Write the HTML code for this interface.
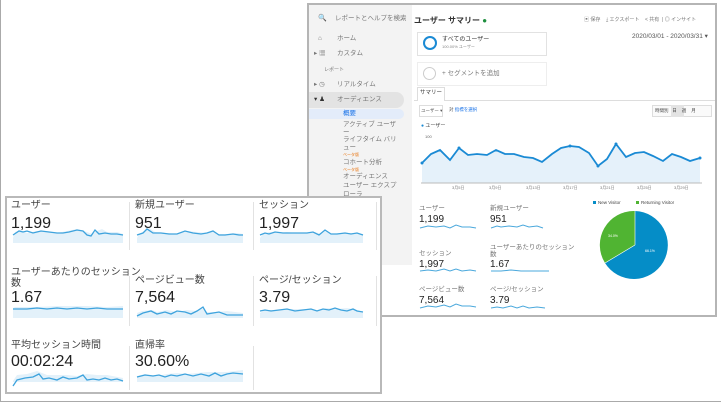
<!DOCTYPE html>
<html><head><meta charset="utf-8"><style>
*{margin:0;padding:0;box-sizing:border-box}
body{width:721px;height:402px;background:#fff;position:relative;overflow:hidden;font-family:"Liberation Sans","Noto Sans CJK JP",sans-serif;color:#333}
.a{position:absolute;white-space:nowrap;line-height:1}
.frame{position:absolute;left:0;top:0;width:721px;height:402px;border:1px solid #aaa;border-top:none;border-right:none}
.back{position:absolute;left:307px;top:3px;width:410px;height:314px;border:2px solid #b5b5b5;background:#fff;overflow:hidden}
.side{position:absolute;left:0;top:0;width:103px;height:260px;background:#f3f3f3}
.front{position:absolute;left:5px;top:196px;width:377px;height:198px;border:2px solid #b9b9b9;background:#fff}
.lbl{font-size:10px;color:#444}
.val{font-size:16px;color:#222}
.vd{position:absolute;width:1px;background:#e2e2e2}
.s{font-size:6.5px;color:#777}
.m{font-size:10px;color:#222}
</style></head><body>
<div class="frame"></div>
<div class="back">
 <div class="side">
  <div class="a s" style="left:9px;top:10px;font-size:7px">🔍</div>
  <div class="a s" style="left:26px;top:11px">レポートとヘルプを検索</div>
  <div class="a s" style="left:9px;top:31px">⌂</div><div class="a s" style="left:28px;top:31px">ホーム</div>
  <div class="a s" style="left:5px;top:46px">▸ ▦</div><div class="a s" style="left:28px;top:46px">カスタム</div>
  <div class="a s" style="left:15px;top:63px;font-size:5px">レポート</div>
  <div class="a s" style="left:5px;top:77px">▸ ◷</div><div class="a s" style="left:28px;top:77px">リアルタイム</div>
  <div style="position:absolute;left:0;top:87px;width:95px;height:16px;background:#e3e3e3;border-radius:0 8px 8px 0"></div>
  <div class="a s" style="left:5px;top:92px;color:#333">▾ ♟</div><div class="a s" style="left:28px;top:92px">オーディエンス</div>
  <div style="position:absolute;left:0;top:104px;width:95px;height:10px;background:#e3ecfa;border-radius:0 6px 6px 0"></div>
  <div class="a s" style="left:34px;top:106px;color:#1a73e8">概要</div>
  <div class="a s" style="left:34px;top:116px;line-height:7.5px">アクティブ ユーザ<br>ー<br>ライフタイム バリ<br>ュー<br><span style="color:#e8710a;font-size:4px">ベータ版</span><br>コホート分析<br><span style="color:#e8710a;font-size:4px">ベータ版</span></div>
  <div class="a s" style="left:34px;top:167px;line-height:9px">オーディエンス<br>ユーザー エクスプ<br>ローラ</div>
 </div>
 <div class="a" style="left:105px;top:12px;font-size:8px;font-weight:bold;color:#333">ユーザー サマリー <span style="color:#1e8e3e">●</span></div>
 <div class="a s" style="left:275px;top:13px;font-size:5px">▣ 保存 &nbsp;&nbsp; ⤓ エクスポート &nbsp;&nbsp; &lt; 共有 &nbsp;| ◎ インサイト</div>
 <div class="a s" style="left:323px;top:29px;font-size:6.5px;color:#555">2020/03/01 - 2020/03/31 ▾</div>
 <div style="position:absolute;left:108px;top:27px;width:130px;height:24px;border:1px solid #e2e2e2"></div>
 <div style="position:absolute;left:114px;top:31px;width:14px;height:14px;border:2.5px solid #1a8ad4;border-radius:50%"></div>
 <div class="a" style="left:133px;top:32px;font-size:6px">すべてのユーザー</div>
 <div class="a" style="left:133px;top:40px;font-size:4px;color:#888">100.00% ユーザー</div>
 <div style="position:absolute;left:108px;top:57px;width:130px;height:24px;border:1px solid #eee"></div>
 <div style="position:absolute;left:114px;top:62px;width:13px;height:13px;border:1px solid #ccc;border-radius:50%"></div>
 <div class="a s" style="left:133px;top:66px">+ セグメントを追加</div>
 <div style="position:absolute;left:105px;top:95px;width:305px;height:1px;background:#ddd"></div>
 <div style="position:absolute;left:108px;top:82px;width:28px;height:14px;border:1px solid #ddd;border-bottom:none;background:#fff"></div>
 <div class="a" style="left:111px;top:86px;font-size:5.5px">サマリー</div>
 <div style="position:absolute;left:110px;top:100px;width:24px;height:12px;border:1px solid #ddd"></div>
 <div class="a" style="left:112px;top:104px;font-size:4.5px;color:#555">ユーザー ▾</div>
 <div class="a" style="left:140px;top:103px;font-size:4.5px;color:#1a73e8"><span style="color:#555">対</span> 指標を選択</div>
 <div style="position:absolute;left:343px;top:100px;width:60px;height:12px;border:1px solid #ddd;background:#fafafa"></div>
 <div style="position:absolute;left:362px;top:100px;width:13px;height:12px;background:#e3e3e3"></div>
 <div class="a" style="left:346px;top:104px;font-size:4.5px;color:#444">時間別 &nbsp; 日 &nbsp;&nbsp; 週 &nbsp;&nbsp; 月</div>
 <div class="a" style="left:112px;top:119px;font-size:5px"><span style="color:#1a8ad4">●</span> ユーザー</div>
 <div class="a" style="left:116px;top:130px;font-size:4px;color:#666">100</div>
</div>
<svg class="a" style="left:0;top:0" width="721" height="402">
 <polygon fill="#e5f1fa" points="422,163 431,154 440,150 450,160 459,148 468,155 477,154 487,155 496,150 505,154 514,154 524,157 533,158 542,162 552,154 561,148 570,146 579,147 589,153 598,166 607,159 616,144 626,157 635,153 644,152 653,156 663,161 672,154 681,157 690,161 700,158 700,183 422,183"/>
 <polyline fill="none" stroke="#1a8ad4" stroke-width="1.8" points="422,163 431,154 440,150 450,160 459,148 468,155 477,154 487,155 496,150 505,154 514,154 524,157 533,158 542,162 552,154 561,148 570,146 579,147 589,153 598,166 607,159 616,144 626,157 635,153 644,152 653,156 663,161 672,154 681,157 690,161 700,158"/>
 <g fill="#1a8ad4"><circle cx="422" cy="163" r="1.5"/><circle cx="459" cy="148" r="1.5"/><circle cx="570" cy="146" r="1.5"/><circle cx="598" cy="166" r="1.5"/><circle cx="616" cy="144" r="1.5"/><circle cx="700" cy="158" r="1.5"/></g>
 <line x1="421" y1="183" x2="702" y2="183" stroke="#bbb"/>
 <g font-size="4" fill="#777" font-family="Liberation Sans"><text x="452" y="189">3月5日</text><text x="489" y="189">3月9日</text><text x="526" y="189">3月13日</text><text x="563" y="189">3月17日</text><text x="600" y="189">3月21日</text><text x="637" y="189">3月25日</text><text x="674" y="189">3月29日</text></g>
 <path d="M635 211 A34 34 0 1 1 605 263 L635 245Z" fill="#058dc7"/>
 <path d="M635 211 A34 34 0 0 0 605 263 L635 245Z" fill="#50b432"/>
 <line x1="635" y1="211" x2="635" y2="245" stroke="#fff" stroke-width=".6"/><line x1="605" y1="263" x2="635" y2="245" stroke="#fff" stroke-width=".6"/>
 <text x="645" y="252" font-size="3.5" fill="#fff">66.1%</text><text x="608" y="237" font-size="3.5" fill="#fff">34.0%</text>
 <rect x="593" y="201" width="3" height="3" fill="#058dc7"/><text x="598" y="204" font-size="4.5" fill="#444">New Visitor</text>
 <rect x="636" y="201" width="3" height="3" fill="#50b432"/><text x="641" y="204" font-size="4.5" fill="#444">Returning Visitor</text>
</svg>
<div class="a s" style="left:419px;top:206px">ユーザー</div><div class="a m" style="left:419px;top:215px">1,199</div>
<div class="a s" style="left:490px;top:206px">新規ユーザー</div><div class="a m" style="left:490px;top:215px">951</div>
<div class="a s" style="left:419px;top:251px">セッション</div><div class="a m" style="left:419px;top:260px">1,997</div>
<div class="a s" style="left:490px;top:244px;line-height:7px">ユーザーあたりのセッション<br>数</div><div class="a m" style="left:490px;top:260px">1.67</div>
<div class="a s" style="left:419px;top:287px">ページビュー数</div><div class="a m" style="left:419px;top:296px">7,564</div>
<div class="a s" style="left:490px;top:287px">ページ/セッション</div><div class="a m" style="left:490px;top:296px">3.79</div>
<svg class="a" style="left:0;top:0" width="721" height="402" fill="none" stroke="#4aa8dc" stroke-width="1">
 <path d="M420 228 l8 -2 8 1 8 -1 6 2 6 -3 6 2 8 0 6 1" /><path d="M491 228 l6 -2 4 1 8 -1 8 1 6 -2 6 2 8 -1 6 2"/><path d="M420 271 l8 -1 8 1 8 -2 6 2 6 -2 6 2 8 -1 6 1"/><path d="M491 271 l10 0 10 -1 10 1 10 0 10 0 8 0"/><path d="M420 308 l8 -2 8 1 8 -2 6 2 6 -3 6 2 8 0 6 1"/><path d="M491 308 l6 -1 6 1 8 -2 6 2 6 -2 6 2 8 -1 8 1"/>
</svg>
<div class="front">
 <div class="vd" style="left:122px;top:4px;height:48px"></div><div class="vd" style="left:246px;top:4px;height:48px"></div><div class="vd" style="left:369px;top:4px;height:48px"></div>
 <div class="vd" style="left:122px;top:78px;height:50px"></div><div class="vd" style="left:246px;top:78px;height:50px"></div><div class="vd" style="left:369px;top:78px;height:50px"></div>
 <div class="vd" style="left:122px;top:148px;height:44px"></div><div class="vd" style="left:246px;top:148px;height:44px"></div>
 <div class="a lbl" style="left:4px;top:3px">ユーザー</div><div class="a val" style="left:4px;top:18px">1,199</div>
 <div class="a lbl" style="left:128px;top:3px">新規ユーザー</div><div class="a val" style="left:128px;top:18px">951</div>
 <div class="a lbl" style="left:252px;top:3px">セッション</div><div class="a val" style="left:252px;top:18px">1,997</div>
 <div class="a lbl" style="left:4px;top:69px;line-height:11px">ユーザーあたりのセッション<br>数</div><div class="a val" style="left:4px;top:92px">1.67</div>
 <div class="a lbl" style="left:128px;top:78px">ページビュー数</div><div class="a val" style="left:128px;top:92px">7,564</div>
 <div class="a lbl" style="left:252px;top:78px">ページ/セッション</div><div class="a val" style="left:252px;top:92px">3.79</div>
 <div class="a lbl" style="left:4px;top:143px">平均セッション時間</div><div class="a val" style="left:4px;top:156px">00:02:24</div>
 <div class="a lbl" style="left:128px;top:143px">直帰率</div><div class="a val" style="left:128px;top:156px">30.60%</div>
 <svg class="a" style="left:0;top:0" width="373" height="194">
  <g fill="#e3f1fa">
   <path d="M6 40 L8 34 14 32 20 35 30 33 40 34 50 35 60 33 70 31 80 34 85 36 90 33 95 31 100 34 110 34 116 36 116 45 6 45Z"/>
   <path d="M130 40 L132 36 138 33 142 30 148 34 160 35 170 36 180 33 190 34 200 35 205 33 210 36 220 36 230 35 236 36 236 45 130 45Z"/>
   <path d="M253 40 L256 36 262 34 270 35 280 34 290 35 300 35 308 34 314 36 318 33 324 36 332 35 340 35 356 36 356 45 253 45Z"/>
   <path d="M6 110 L8 109 30 109 50 108 80 108 100 109 116 108 116 120 6 120Z"/>
   <path d="M130 115 L135 113 145 112 150 114 160 112 170 114 180 112 190 113 195 110 200 114 210 114 220 113 236 115 236 120 130 120Z"/>
   <path d="M253 115 L258 112 268 112 280 111 290 111 300 111 310 112 320 110 330 111 340 110 350 112 356 114 356 120 253 120Z"/>
   <path d="M6 183 L10 177 20 176 30 173 40 177 60 177 70 178 80 176 90 177 100 177 116 180 116 184 6 184Z"/>
   <path d="M130 178 L138 176 150 178 160 176 170 175 180 176 190 175 200 174 210 174 220 174 236 172 236 184 130 184Z"/>
  </g>
  <g fill="none" stroke="#3ea3dd" stroke-width="1.3">
   <path d="M6 37 L12 33 16 34 20 33 26 35 34 33 42 34 50 35 56 35 62 34 70 32 76 33 80 37 84 38 88 32 92 36 98 35 104 36 110 36 116 37"/>
   <path d="M130 37 L136 35 140 31 146 35 154 35 162 36 170 36 178 33 186 35 194 36 200 35 206 33 212 37 218 37 226 36 232 37 236 37"/>
   <path d="M253 37 L258 35 262 36 268 34 276 35 284 35 292 35 300 35 306 34 312 37 318 32 324 36 330 36 338 35 344 36 350 35 356 37"/>
   <path d="M6 111 L20 111 30 110 40 111 50 110 60 111 70 110 80 111 90 110 100 111 116 111"/>
   <path d="M130 118 L136 115 144 113 150 116 158 114 164 116 170 113 178 114 184 116 190 113 196 109 200 116 206 115 212 114 220 117 226 117 236 117"/>
   <path d="M253 113 L258 112 264 113 272 112 280 111 288 113 296 112 304 111 310 113 316 111 322 112 328 110 334 112 340 113 346 111 350 113 356 114"/>
   <path d="M6 188 L10 182 18 180 26 179 32 176 36 181 42 180 50 182 56 179 62 181 70 180 76 177 80 182 86 181 92 182 98 180 104 182 110 181 116 183"/>
   <path d="M130 179 L138 177 146 178 152 177 158 179 164 177 170 178 178 176 186 178 194 176 202 178 208 175 214 178 220 176 226 175 236 176"/>
  </g>
 </svg>
</div>
</body></html>
